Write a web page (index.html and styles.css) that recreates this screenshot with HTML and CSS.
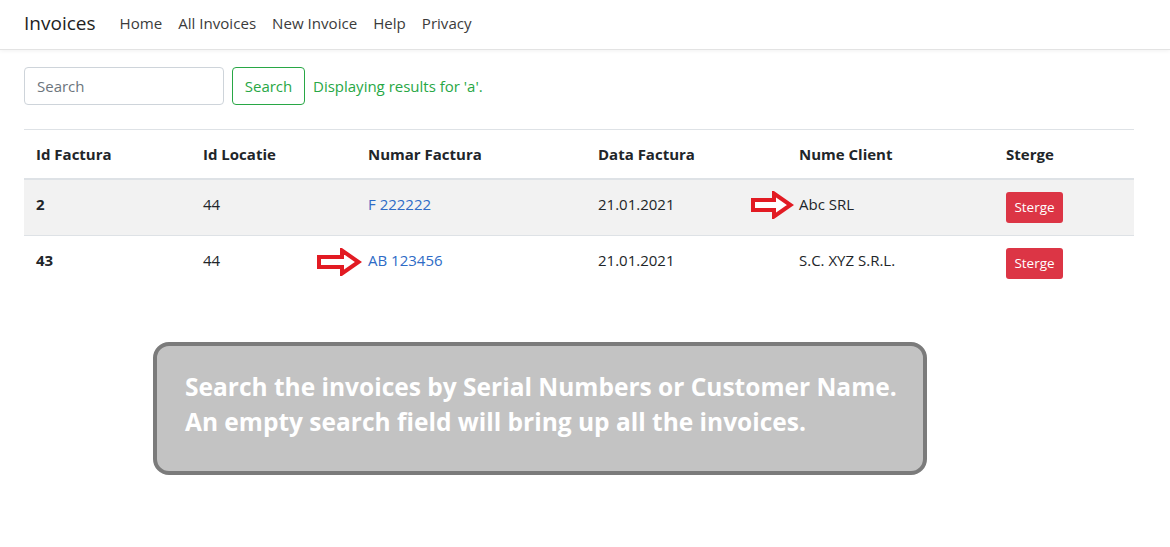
FILE: index.html
```html
<!DOCTYPE html>
<html lang="ro">
<head>
<meta charset="utf-8">
<title>Invoices</title>
<link rel="stylesheet" href="styles.css">
</head>
<body>
<header class="navbar">
  <a class="brand" href="#">Invoices</a>
  <nav class="nav">
    <a href="#">Home</a>
    <a href="#">All Invoices</a>
    <a href="#">New Invoice</a>
    <a href="#">Help</a>
    <a href="#">Privacy</a>
  </nav>
</header>
<main class="main">
  <form class="search">
    <input class="search-input" type="text" placeholder="Search">
    <button class="btn-search" type="button">Search</button>
    <span class="result">Displaying results for 'a'.</span>
  </form>
  <table class="table">
    <thead>
      <tr>
        <th class="c1">Id Factura</th>
        <th class="c2">Id Locatie</th>
        <th class="c3">Numar Factura</th>
        <th class="c4">Data Factura</th>
        <th class="c5">Nume Client</th>
        <th class="c6">Sterge</th>
      </tr>
    </thead>
    <tbody>
      <tr class="striped">
        <td class="id">2</td>
        <td>44</td>
        <td><a class="link" href="#">F 222222</a></td>
        <td>21.01.2021</td>
        <td><span class="marked"><svg class="arrow arrow-a" viewBox="0 0 44 28" aria-hidden="true"><path d="M3 9 H24 V2.5 L40.5 14 L24 25.5 V19 H3 Z" fill="#fff" stroke="#e21b23" stroke-width="4" stroke-linejoin="miter"/></svg>Abc SRL</span></td>
        <td><button class="btn-del" type="button">Sterge</button></td>
      </tr>
      <tr>
        <td class="id">43</td>
        <td>44</td>
        <td><span class="marked"><svg class="arrow arrow-b" viewBox="0 0 46 28" aria-hidden="true"><path d="M3 9 H26 V2.5 L42.5 14 L26 25.5 V19 H3 Z" fill="#fff" stroke="#e21b23" stroke-width="4" stroke-linejoin="miter"/></svg><a class="link" href="#">AB 123456</a></span></td>
        <td>21.01.2021</td>
        <td>S.C. XYZ S.R.L.</td>
        <td><button class="btn-del" type="button">Sterge</button></td>
      </tr>
    </tbody>
  </table>
  <div class="callout">
    <p>Search the invoices by Serial Numbers or Customer Name.<br>An empty search field will bring up all the invoices.</p>
  </div>
</main>
</body>
</html>
```
FILE: styles.css
```css
* { box-sizing: border-box; }
html, body { margin: 0; padding: 0; background: #fff; }
body {
  font-family: "Open Sans", "Noto Sans", sans-serif;
  font-size: 15px;
  color: #212529;
  width: 1170px;
  height: 547px;
  overflow: hidden;
  position: relative;
}
.navbar {
  height: 50px;
  display: flex;
  align-items: center;
  padding-left: 24px;
  padding-bottom: 4px;
  border-bottom: 1px solid #e3e3e3;
  box-shadow: 0 1px 4px rgba(0,0,0,0.06);
}
.brand {
  font-size: 19px;
  color: #222;
  text-decoration: none;
  margin-right: 24px;
}
.nav { display: flex; gap: 16px; }
.nav a {
  color: #3b3b3b;
  text-decoration: none;
  font-size: 15.1px;
}
.main {
  padding: 17px 36px 0 24px;
}
.search {
  display: flex;
  align-items: center;
  height: 38px;
}
.search-input {
  width: 200px;
  height: 38px;
  border: 1px solid #ced4da;
  border-radius: 4px;
  padding: 0 12px;
  font-family: inherit;
  font-size: 15px;
  color: #495057;
}
.search-input::placeholder { color: #6c757d; }
.btn-search {
  margin-left: 8px;
  height: 38px;
  width: 73px;
  border: 1px solid #28a745;
  border-radius: 4px;
  background: #fff;
  color: #28a745;
  font-family: inherit;
  font-size: 15px;
  padding: 0;
}
.result {
  margin-left: 8px;
  color: #28a745;
  font-size: 15px;
}
.table {
  margin-top: 24px;
  width: 1110px;
  border-collapse: collapse;
  border-top: 1px solid #dee2e6;
}
.table th {
  text-align: left;
  font-weight: 700;
  padding: 12px;
  line-height: 24px;
  border-bottom: 2px solid #dee2e6;
  vertical-align: top;
}
.c1 { width: 167px; }
.c2 { width: 165px; }
.c3 { width: 230px; }
.c4 { width: 201px; }
.c5 { width: 207px; }
.c6 { width: 140px; }
.table td {
  padding: 12px;
  line-height: 24px;
  height: 56px;
  border-bottom: 1px solid #dee2e6;
  vertical-align: top;
}
.table tbody tr:last-child td { border-bottom: none; }
.striped td { background: #f2f2f2; }
.id { font-weight: 700; }
.link { color: #2e6bc6; text-decoration: none; }
.marked { position: relative; }
.arrow { position: absolute; top: 50%; }
.arrow-a { width: 44px; height: 28px; right: calc(100% + 5px); margin-top: -13px; }
.arrow-b { width: 46px; height: 28px; right: calc(100% + 6px); margin-top: -12px; }
.btn-del {
  display: block;
  width: 57px;
  height: 31px;
  background: #dc3545;
  color: #fff;
  border: none;
  border-radius: 3px;
  font-family: inherit;
  font-size: 13.5px;
  line-height: 31px;
  padding: 0;
  margin: 0;
}
.callout {
  position: absolute;
  left: 153px;
  top: 342px;
  width: 774px;
  height: 133px;
  background: #c3c3c3;
  border: 4px solid #7b7b7b;
  border-radius: 16px;
  padding: 23px 0 0 28px;
}
.callout p {
  margin: 0;
  color: #fff;
  font-weight: 700;
  font-size: 24.5px;
  line-height: 35px;
  font-family: "Open Sans", sans-serif;
}
```
